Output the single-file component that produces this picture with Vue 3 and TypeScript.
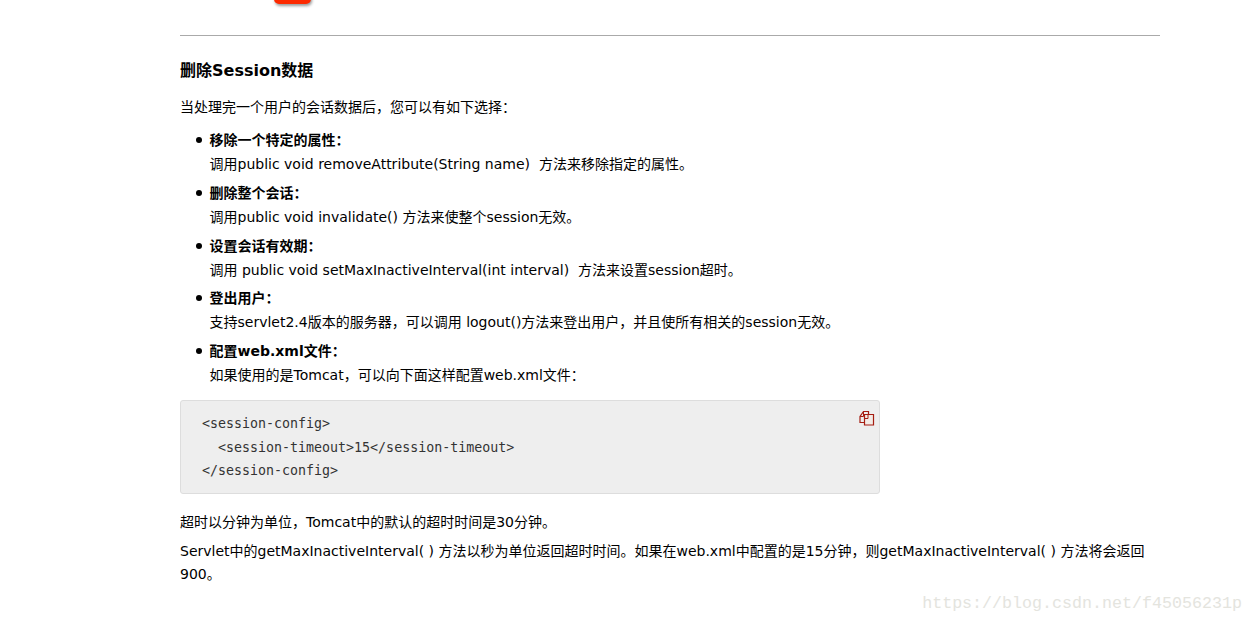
<script setup lang="ts">
interface Item { title: string; desc: string }
const items: Item[] = [
  { title: '移除一个特定的属性：', desc: '调用public void removeAttribute(String name)  方法来移除指定的属性。' },
  { title: '删除整个会话：', desc: '调用public void invalidate() 方法来使整个session无效。' },
  { title: '设置会话有效期：', desc: '调用 public void setMaxInactiveInterval(int interval)  方法来设置session超时。' },
  { title: '登出用户：', desc: '支持servlet2.4版本的服务器，可以调用 logout()方法来登出用户，并且使所有相关的session无效。' },
  { title: '配置web.xml文件：', desc: '如果使用的是Tomcat，可以向下面这样配置web.xml文件：' },
]
const code = `<session-config>
  <session-timeout>15</session-timeout>
</session-config>`
</script>

<template>
  <div class="page">
    <div class="red-btn"></div>
    <main class="article">
      <hr class="rule" />
      <h2 class="title">删除Session数据</h2>
      <p class="intro">当处理完一个用户的会话数据后，您可以有如下选择：</p>
      <ul class="list">
        <li v-for="item in items" :key="item.title" class="item">
          <strong class="item-title">{{ item.title }}</strong>
          <span class="item-desc">{{ item.desc }}</span>
        </li>
      </ul>
      <div class="code">
        <pre class="code-text">{{ code }}</pre>
        <svg class="copy" width="16" height="16" viewBox="0 0 16 16" fill="none" stroke="#a51d12" stroke-width="1.2">
          <path d="M5.5 12.5H1V6.5L4.5 1.5H9.5V4.5" />
          <path d="M1 6.5H4.5V1.5" stroke-width="1" />
          <path d="M5.5 4.5H14.5V15H5.5V4.5Z" fill="#f3ebe6" />
          <path d="M5.5 8.5H9V4.5" stroke-width="1" />
        </svg>
      </div>
      <p class="after">超时以分钟为单位，Tomcat中的默认的超时时间是30分钟。</p>
      <p class="last">Servlet中的getMaxInactiveInterval( ) 方法以秒为单位返回超时时间。如果在web.xml中配置的是15分钟，则getMaxInactiveInterval( ) 方法将会返回900。</p>
    </main>
    <div class="watermark">https://blog.csdn.net/f45056231p</div>
  </div>
</template>

<style>
html, body { margin: 0; background: #fff; }
</style>

<style scoped>
.page {
  position: relative;
  width: 1253px;
  height: 623px;
  overflow: hidden;
  background: #fff;
  color: #000;
  font-family: "DejaVu Sans", "Noto Sans CJK SC", sans-serif;
  font-size: 14px;
}
.red-btn {
  position: absolute;
  left: 274px;
  top: -10px;
  width: 37px;
  height: 14px;
  border-radius: 5px;
  background: #fd2a00;
  box-shadow: 1px 2px 3px rgba(0, 0, 0, 0.4);
}
.article {
  width: 980px;
  margin-left: 180px;
  padding-top: 35px;
}
.rule {
  height: 1px;
  margin: 0;
  border: 0;
  background: #aaa;
}
.title {
  margin: 24px 0 0;
  font-size: 16px;
  line-height: 22px;
  font-weight: 700;
}
.intro {
  margin: 15px 0 0;
  line-height: 20px;
}
.list {
  margin: 11px 0 0;
  padding: 0 0 0 29.5px;
  list-style: none;
}
.item {
  position: relative;
  margin-bottom: 4.75px;
  line-height: 24px;
}
.item::before {
  content: "";
  position: absolute;
  left: -14px;
  top: 9px;
  width: 6px;
  height: 6px;
  border-radius: 50%;
  background: #000;
}
.item-title,
.item-desc {
  display: block;
  white-space: pre;
}
.code {
  position: relative;
  box-sizing: border-box;
  width: 700px;
  height: 94px;
  margin-top: 13px;
  padding: 11px 21px;
  background: #eee;
  border: 1px solid #ddd;
  border-radius: 3px;
}
.code-text {
  margin: 0;
  font-family: "DejaVu Sans Mono", monospace;
  font-size: 13.3px;
  line-height: 23.5px;
  color: #333;
}
.copy {
  position: absolute;
  right: 4px;
  top: 9px;
}
.after {
  margin: 17px 0 0;
  line-height: 22px;
}
.last {
  margin: 7px 0 0;
  line-height: 23px;
}
.watermark {
  position: absolute;
  right: 11px;
  top: 594px;
  font-family: "Liberation Mono", monospace;
  font-size: 16.67px;
  color: #e4e4de;
  white-space: nowrap;
}
</style>
